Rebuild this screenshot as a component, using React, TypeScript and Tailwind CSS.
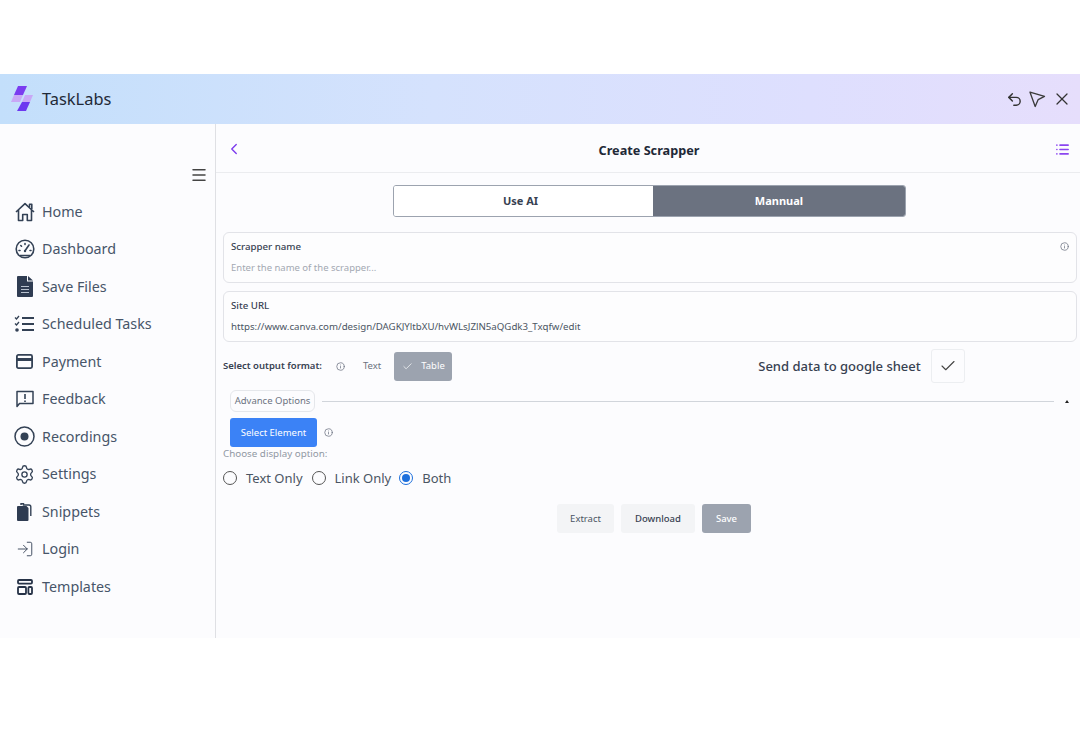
import React from "react";
import { Settings, LogIn, Menu, ChevronLeft, List, Info, Check, Undo2, X } from "lucide-react";

function Logo() {
  return (
    <svg width="24" height="28" viewBox="0 0 24 28">
      <polygon points="7,1 16,1 12,10 3,10" fill="#7a3cf0" />
      <polygon points="3,10 12,10 9,17 0,17" fill="#c9a8f6" />
      <polygon points="14,10 22,10 19,17 11,17" fill="#c9a8f6" />
      <polygon points="11,17 19,17 15,26 6,26" fill="#6d38f0" />
    </svg>
  );
}

function HomeIcon() {
  return (
    <svg width="20" height="20" viewBox="0 0 20 20" fill="none" stroke="#334155" strokeWidth="1.6" strokeLinejoin="round">
      <path d="M1 10L10 1.6 19 10M3.5 8v10.5h4.2v-6h4.6v6h4.2V8" />
      <path d="M14.5 5V2.2h2.3V7" />
    </svg>
  );
}

function GaugeIcon() {
  return (
    <svg width="20" height="20" viewBox="0 0 20 20" fill="none" stroke="#334155" strokeWidth="1.6" strokeLinecap="round">
      <circle cx="10" cy="10" r="8.8" />
      <path d="M4 11.5h1M15 11.5h1M5.8 6.5l.7.7M10 4.5v1M14 6l-3.6 5.2" />
      <circle cx="10" cy="12" r="1.2" fill="#334155" stroke="none" />
      <path d="M5 16.5h10" strokeWidth="1.4" />
    </svg>
  );
}

function SolidFile() {
  return (
    <svg width="16" height="21" viewBox="0 0 16 21">
      <path d="M1 0h9v5.5h6V20a1 1 0 0 1-1 1H1a1 1 0 0 1-1-1V1a1 1 0 0 1 1-1z" fill="#2f3c52" />
      <path d="M11 0l5 4.5h-5z" fill="#2f3c52" />
      <path d="M4 10.5h8M4 13.5h8M4 16.5h8" stroke="#b9c2cf" strokeWidth="1.2" />
    </svg>
  );
}

function Scheduled() {
  return (
    <svg width="21" height="18" viewBox="0 0 21 18" fill="none" stroke="#334155">
      <path d="M1 2.5l1.5 1.5L5 1M1 8.5L2.5 10 5 7" strokeWidth="1.3" />
      <circle cx="3" cy="15" r="1.8" fill="#334155" stroke="none" />
      <path d="M8 3h12M8 9h12M8 15h12" strokeWidth="2.2" />
    </svg>
  );
}

function Recording() {
  return (
    <svg width="21" height="21" viewBox="0 0 21 21" fill="none">
      <circle cx="10.5" cy="10.5" r="9.5" stroke="#334155" strokeWidth="1.5" />
      <circle cx="10.5" cy="10.5" r="4" fill="#334155" />
    </svg>
  );
}

function Payment() {
  return (
    <svg width="18" height="15" viewBox="0 0 18 15" fill="none">
      <rect x="0.9" y="0.9" width="15.2" height="13.2" rx="1.5" stroke="#334155" strokeWidth="1.8" />
      <rect x="1" y="4" width="15" height="3" fill="#334155" />
    </svg>
  );
}

function Feedback() {
  return (
    <svg width="18" height="18" viewBox="0 0 18 18" fill="none">
      <path d="M1 14.5V1.5h16v12H3.5L1 16.5z" stroke="#334155" strokeWidth="1.5" strokeLinejoin="round" />
      <path d="M9 4v5M9 10.5v1.5" stroke="#334155" strokeWidth="1.6" />
    </svg>
  );
}

function Snippets() {
  return (
    <svg width="15" height="18" viewBox="0 0 15 18" fill="none">
      <path d="M4 2V0.8h2.5V2H12a1.8 1.8 0 0 1 1.8 1.8V13" stroke="#334155" strokeWidth="1.4" />
      <path d="M1 3h8.5l2 2v12a1 1 0 0 1-1 1H1a1 1 0 0 1-1-1V4a1 1 0 0 1 1-1z" fill="#2f3c52" />
    </svg>
  );
}

function Templates() {
  return (
    <svg width="16" height="16" viewBox="0 0 16 16" fill="none" stroke="#263247" strokeWidth="1.8">
      <rect x="1" y="1" width="14" height="3.6" rx="1" />
      <rect x="1" y="8" width="8" height="7" rx="1" />
      <rect x="11.4" y="8" width="3.6" height="7" rx="1" />
    </svg>
  );
}

function Pointer() {
  return (
    <svg width="17" height="17" viewBox="0 0 17 17" fill="none" stroke="#3a3a3a" strokeWidth="1.3" strokeLinejoin="round">
      <path d="M1 1.2L15.5 5.4 9.2 8.6 6.2 15.5z" />
    </svg>
  );
}

const c = "text-[#334155]";
const items: [string, React.ReactNode][] = [
  ["Home", <HomeIcon key="h" />],
  ["Dashboard", <GaugeIcon key="d" />],
  ["Save Files", <SolidFile key="s" />],
  ["Scheduled Tasks", <Scheduled key="st" />],
  ["Payment", <Payment key="p" />],
  ["Feedback", <Feedback key="f" />],
  ["Recordings", <Recording key="r" />],
  ["Settings", <Settings key="se" size={21} strokeWidth={1.5} className={c} />],
  ["Snippets", <Snippets key="sn" />],
  ["Login", <LogIn key="l" size={18} strokeWidth={1.2} className={c} />],
  ["Templates", <Templates key="t" />],
];

function Field({ label, value, muted, info }: { label: string; value: string; muted?: boolean; info?: boolean }) {
  return (
    <div className="h-[51px] rounded-[6px] border border-[#e2e3e8] bg-[#fdfdfe] pl-[7px] pr-[8px] pt-[6px]">
      <div className="flex items-center justify-between">
        <span className="text-[9.7px] leading-[15px] font-medium text-[#374151]">{label}</span>
        {info && <Info size={9} className="-mr-[1px] text-[#6b7280]" />}
      </div>
      <div className={`mt-[7px] leading-[14px] ${muted ? "text-[9.5px] text-[#a3a8b2]" : "text-[9.7px] text-[#4b5563]"}`}>{value}</div>
    </div>
  );
}

function Radio({ label, on, className }: { label: string; on?: boolean; className?: string }) {
  return (
    <div className={`flex items-center gap-[9px] ${className ?? ""}`}>
      <span className={`flex size-[14px] items-center justify-center rounded-full border-[1.5px] ${on ? "border-[#1d6fdc]" : "border-[#555]"}`}>
        {on && <span className="size-[8px] rounded-full bg-[#1d6fdc]" />}
      </span>
      <span className="text-[13px] leading-[18px] text-[#4b5563]">{label}</span>
    </div>
  );
}

export default function App() {
  return (
    <div className="h-[754px] w-[1080px] overflow-hidden bg-white pt-[74px] font-['Noto_Sans','Inter',sans-serif]">
      <header className="flex h-[50px] items-center justify-between bg-[linear-gradient(90deg,#c3dffb_0%,#d5e2fd_40%,#dedffe_75%,#e6defc_100%)] pl-[11px] pr-[8px]">
        <div className="flex items-center gap-[7px]">
          <Logo />
          <span className="text-[16.4px] leading-[24px] text-[#1f2937]">TaskLabs</span>
        </div>
        <div className="flex items-center gap-[6px] text-[#333]">
          <Undo2 size={17} strokeWidth={2} />
          <Pointer />
          <X size={20} strokeWidth={1.5} />
        </div>
      </header>
      <div className="flex h-[514px] bg-[#fcfcfe]">
        <aside className="flex w-[216px] shrink-0 flex-col border-r border-[#dfe0e4]">
          <div className="flex justify-end pr-[7px] pt-[42px]">
            <Menu size={18} strokeWidth={2} className="text-[#444]" />
          </div>
          <nav className="mt-[9px] flex flex-col">
            {items.map(([label, icon]) => (
              <div key={label} className="flex h-[37.5px] items-center">
                <div className="flex w-[42px] justify-center pl-[8px] pr-[1px]">{icon}</div>
                <span className="text-[14.3px] leading-[20px] text-[#475569]">{label}</span>
              </div>
            ))}
          </nav>
        </aside>
        <main className="min-w-0 flex-1">
          <div className="flex h-[49px] items-center justify-between border-b border-[#ebecef] pl-[9px] pr-[10px]">
            <ChevronLeft size={18} strokeWidth={1.8} className="mt-[2px] text-[#7c3aed]" />
            <span className="mt-[5px] text-[12.7px] font-bold text-[#1f2937]">Create Scrapper</span>
            <List size={15} strokeWidth={2.6} className="mt-[2px] text-[#8b45f0]" />
          </div>
          <div className="mt-[12px] flex justify-center pl-[3px]">
            <div className="flex h-[32px] w-[513px] overflow-hidden rounded-[3px] border border-[#9ca3af]">
              <div className="flex w-[259px] items-center justify-center bg-white pr-[6px] pt-[1px] text-[11px] font-bold text-[#374151]">Use AI</div>
              <div className="flex flex-1 items-center justify-center bg-[#6b7280] pt-[1px] text-[11px] font-bold text-white">Mannual</div>
            </div>
          </div>
          <div className="mt-[15px] flex flex-col gap-[8px] pl-[7px] pr-[3px]">
            <Field label="Scrapper name" value="Enter the name of the scrapper..." muted info />
            <Field label="Site URL" value="https://www.canva.com/design/DAGKJYltbXU/hvWLsJZlN5aQGdk3_Txqfw/edit" />
          </div>
          <div className="mt-[7px] flex h-[34px] items-center pl-[7px]">
            <span className="w-[99px] text-[9.5px] font-semibold text-[#374151]">Select output format:</span>
            <Info size={9} className="ml-[14px] text-[#6b7280]" />
            <span className="ml-[18px] text-[9.5px] text-[#6b7280]">Text</span>
            <div className="ml-[13px] flex h-[29px] w-[58px] items-center gap-[8px] rounded-[3px] bg-[#9ca3af] pl-[8px] text-[9.5px] text-white">
              <Check size={11} strokeWidth={1.5} />
              <span>Table</span>
            </div>
            <span className="ml-[306px] mt-[2px] text-[13px] font-medium text-[#374151]">Send data to google sheet</span>
            <div className="ml-[10px] flex size-[34px] items-center justify-center rounded-[3px] border border-[#eceef1]">
              <Check size={18} strokeWidth={1.5} className="text-[#444]" />
            </div>
          </div>
          <div className="mt-[7px] flex items-center pl-[14px] pr-[11px]">
            <span className="flex h-[22px] w-[85px] items-center justify-center rounded-[6px] border border-[#e5e7eb] text-[9.5px] text-[#6b7280]">Advance Options</span>
            <div className="ml-[7px] h-px w-[732px] bg-[#d1d5db]" />
            <span className="ml-auto size-0 border-x-[2px] border-b-[3px] border-x-transparent border-b-[#222]" />
          </div>
          <div className="mt-[6px] flex items-center pl-[14px]">
            <div className="flex h-[29px] w-[87px] items-center justify-center rounded-[3px] bg-[#3b82f6] pt-[1px] text-[9.5px] text-white">Select Element</div>
            <Info size={9} className="ml-[7px] text-[#6b7280]" />
          </div>
          <div className="pl-[7px] text-[9.8px] leading-[14px] text-[#9198a3]">Choose display option:</div>
          <div className="mt-[8px] flex items-center gap-[9px] pl-[7px]">
            <Radio label="Text Only" />
            <Radio label="Link Only" />
            <Radio label="Both" on className="-ml-[1px]" />
          </div>
          <div className="mt-[17px] flex items-center gap-[7px] pl-[341px]">
            <div className="flex h-[29px] w-[57px] items-center justify-center rounded-[3px] bg-[#f3f4f6] pt-[1px] text-[9.5px] text-[#4b5563]">Extract</div>
            <div className="flex h-[29px] w-[74px] items-center justify-center rounded-[3px] bg-[#f3f4f6] pt-[1px] text-[9.5px] font-medium text-[#374151]">Download</div>
            <div className="flex h-[29px] w-[49px] items-center justify-center rounded-[3px] bg-[#9ca3af] pt-[1px] text-[9.5px] font-medium text-white">Save</div>
          </div>
        </main>
      </div>
    </div>
  );
}
